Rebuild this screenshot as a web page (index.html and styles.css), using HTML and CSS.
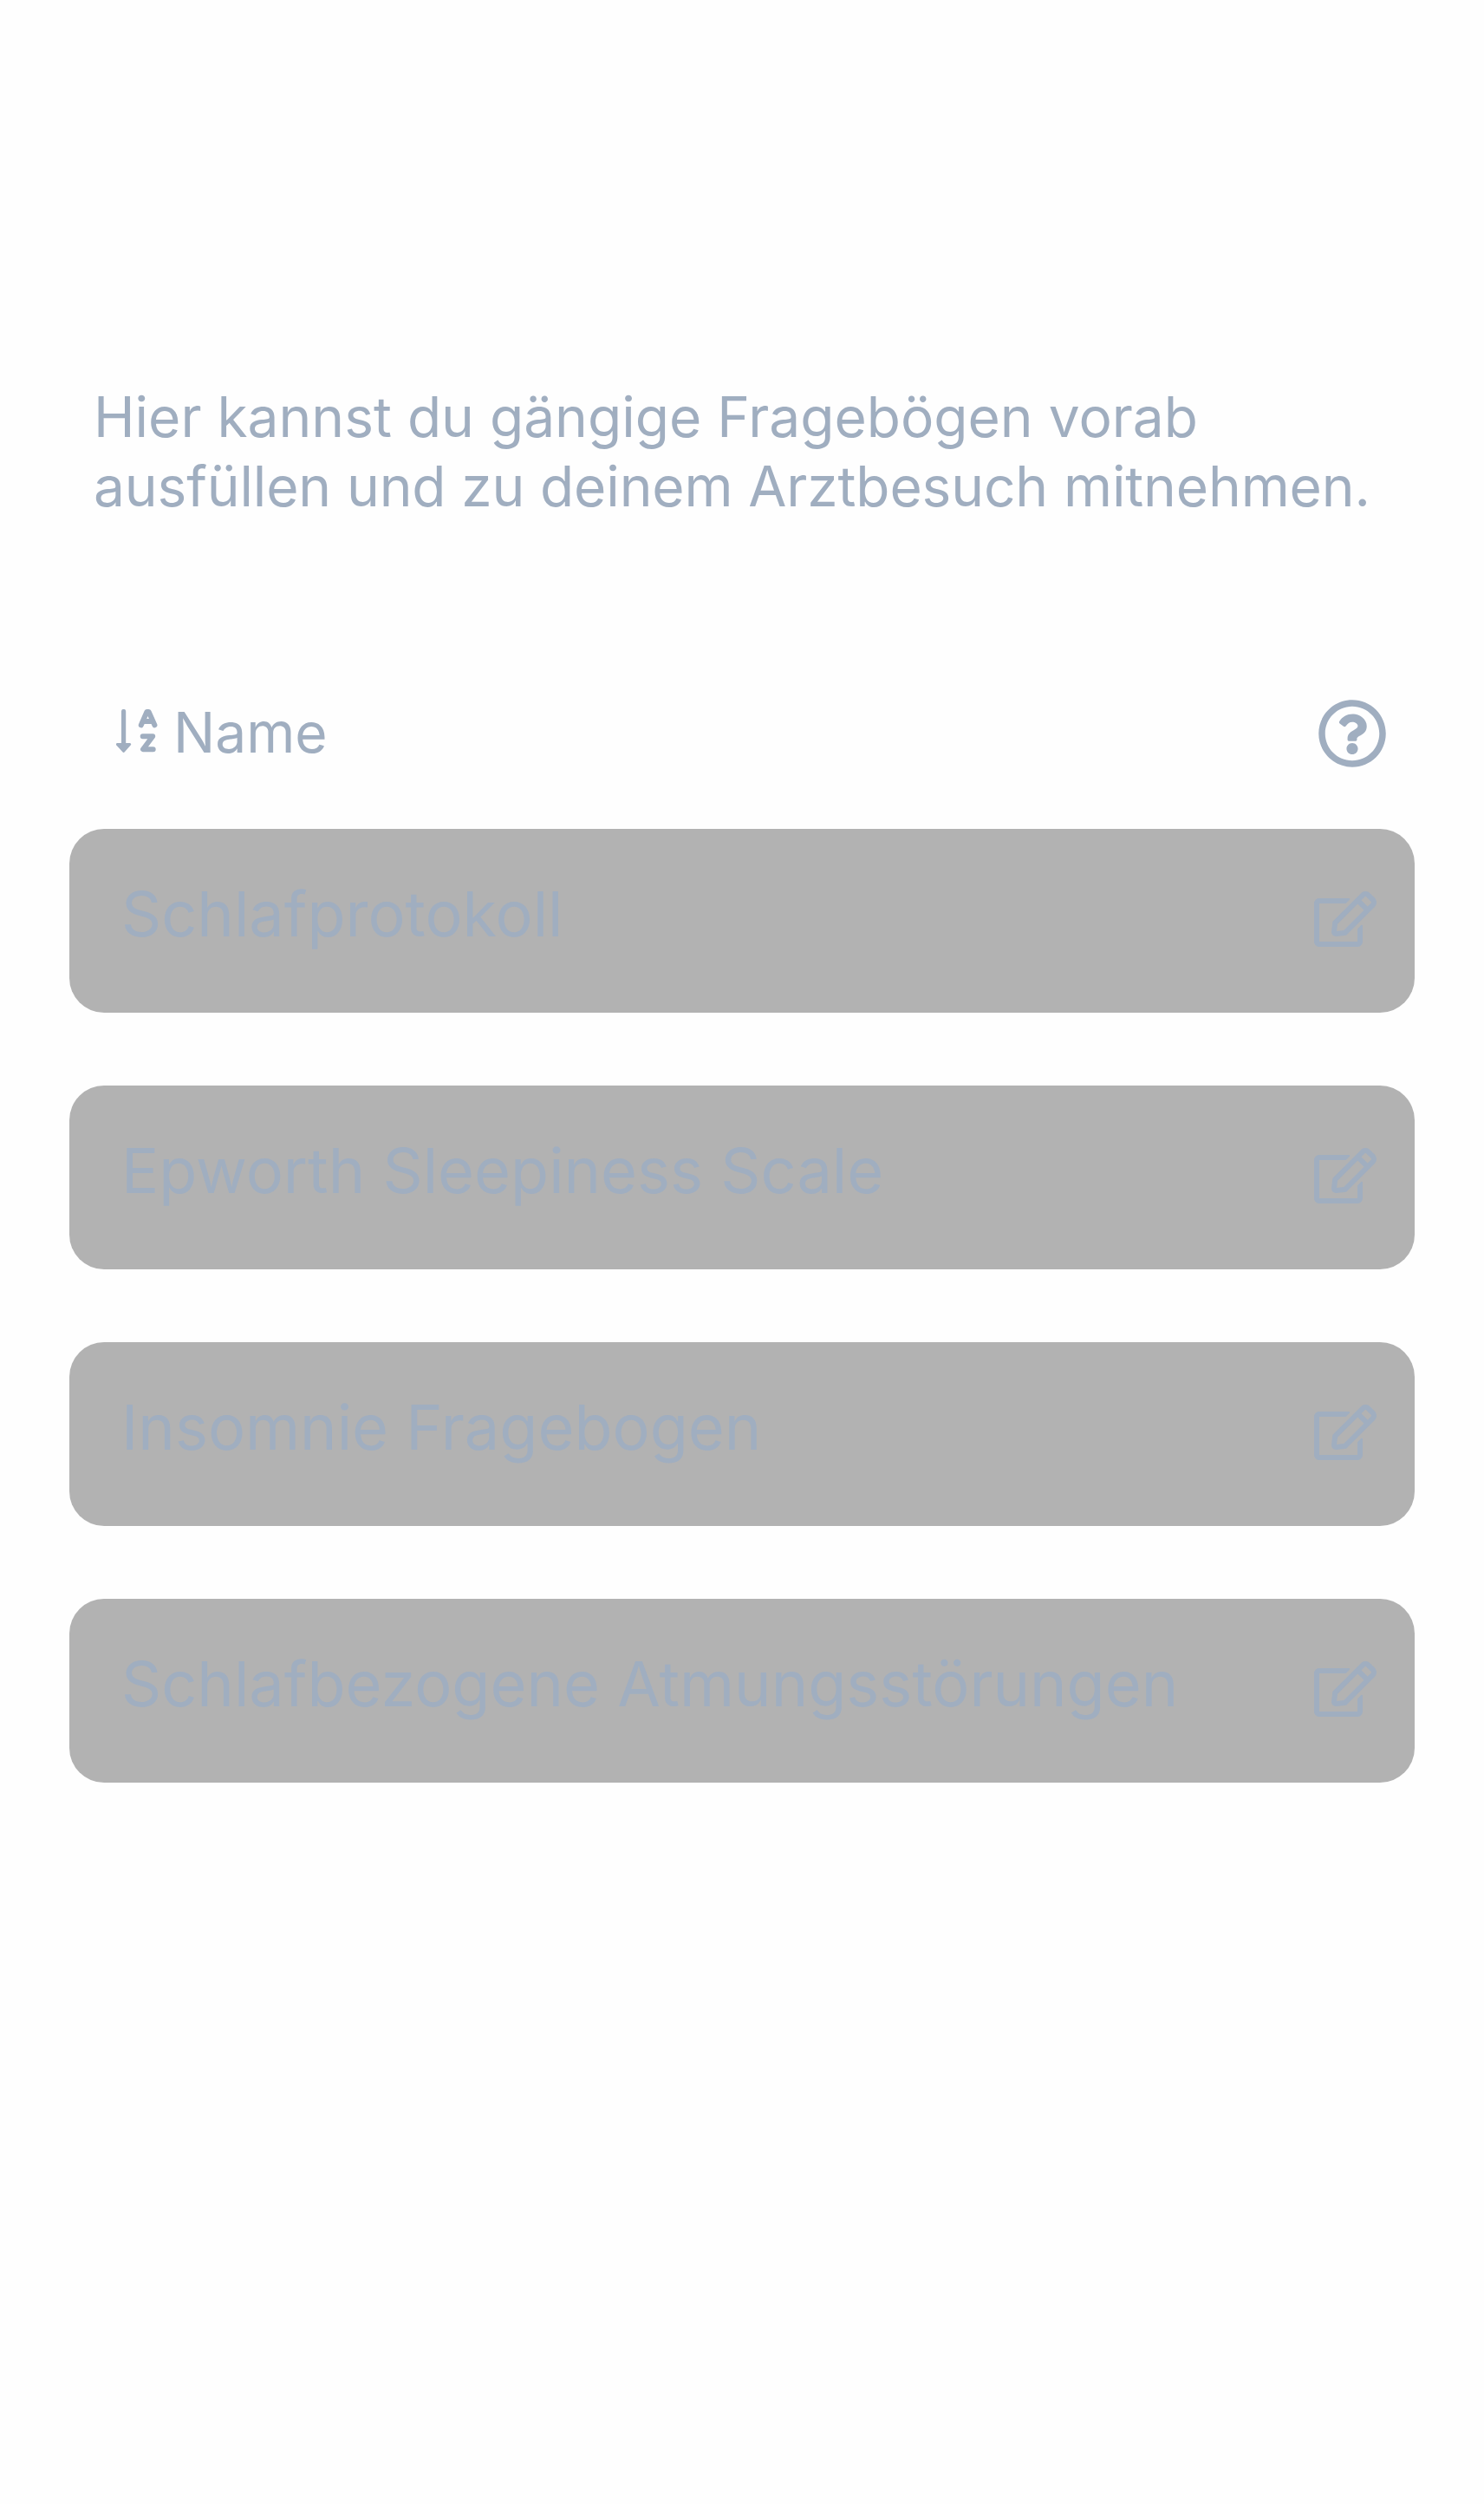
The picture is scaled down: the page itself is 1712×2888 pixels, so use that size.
FILE: index.html
```html
<!DOCTYPE html>
<html lang="de">
<head>
<meta charset="utf-8">
<title>Fragebögen</title>
<link rel="stylesheet" href="styles.css">
</head>
<body>
<svg class="sprite" aria-hidden="true">
  <symbol id="edit" viewBox="0 0 576 512"><path d="M402.3 344.9l32-32c5-5 13.7-1.5 13.7 5.7V464c0 26.5-21.5 48-48 48H48c-26.5 0-48-21.5-48-48V112c0-26.5 21.5-48 48-48h273.5c7.1 0 10.7 8.6 5.7 13.7l-32 32c-1.5 1.5-3.5 2.3-5.7 2.3H48v352h352V350.5c0-2.1.8-4.1 2.3-5.6zm156.6-201.8L296.3 405.7l-90.4 10c-26.2 2.9-48.5-19.2-45.6-45.6l10-90.4L432.9 17.1c22.9-22.9 59.9-22.9 82.7 0l43.2 43.2c22.9 22.9 22.9 60 .1 82.8zM460.1 174L402 115.9 216.2 301.8l-7.3 65.3 65.3-7.3L460.1 174zm64.8-79.7l-43.2-43.2c-4.1-4.1-10.8-4.1-14.8 0L436 82l58.1 58.1 30.9-30.9c4-4.2 4-10.8-.1-14.9z"/></symbol>
</svg>
<main class="page">
  <p class="intro">Hier kannst du gängige Fragebögen vorab <span class="tight">ausfüllen und zu deinem Arztbesuch mitnehmen.</span></p>
  <div class="toolbar">
    <div class="sort">
      <svg class="sort-icon" viewBox="0 0 48 50"><path d="M6 2.500a2.600 2.600 0 0 1 5.200 0V39h4.500a1.500 1.500 0 0 1 1 2.600L9.800 49.300a1.600 1.600 0 0 1-2.400 0L.3 41.600A1.500 1.500 0 0 1 1.300 39H6z"/><path class="glyph" d="M28.800 18.300L35.400 3h2.200L44.400 18.300M32 14h9M30.700 31.200H42.200L31 46.200H42.700"/></svg>
      <span class="sort-label">Name</span>
    </div>
    <svg class="help-icon" viewBox="0 0 512 512"><path d="M256 8C119.043 8 8 119.083 8 256c0 136.997 111.043 248 248 248s248-111.003 248-248C504 119.083 392.957 8 256 8zm0 448c-110.532 0-200-89.431-200-200 0-110.495 89.472-200 200-200 110.491 0 200 89.471 200 200 0 110.53-89.431 200-200 200zm107.244-255.2c0 67.052-72.421 68.084-72.421 92.863V300c0 6.627-5.373 12-12 12h-45.647c-6.627 0-12-5.373-12-12v-8.659c0-35.745 27.1-50.034 47.579-61.516 17.561-9.845 28.324-16.541 28.324-29.579 0-17.246-21.999-28.693-39.784-28.693-23.189 0-33.894 10.977-48.942 29.969-4.057 5.12-11.46 6.071-16.666 2.124l-27.824-21.098c-5.107-3.872-6.251-11.066-2.644-16.363C184.846 131.491 214.94 112 261.794 112c49.071 0 101.45 38.304 101.45 88.8zM298 368c0 23.159-18.841 42-42 42s-42-18.841-42-42 18.841-42 42-42 42 18.841 42 42z"/></svg>
  </div>
  <ul class="list">
    <li class="card"><span>Schlafprotokoll</span><svg class="edit-icon"><use href="#edit"/></svg></li>
    <li class="card"><span>Epworth Sleepiness Scale</span><svg class="edit-icon"><use href="#edit"/></svg></li>
    <li class="card"><span>Insomnie Fragebogen</span><svg class="edit-icon"><use href="#edit"/></svg></li>
    <li class="card"><span>Schlafbezogene Atmungsstörungen</span><svg class="edit-icon"><use href="#edit"/></svg></li>
  </ul>
</main>
</body>
</html>
```
FILE: styles.css
```css
* { box-sizing: border-box; margin: 0; padding: 0; }
body {
  background: #fefefe;
  color: #a0aec0;
  font-family: Inter, "Liberation Sans", sans-serif;
  font-size: 64px;
  line-height: 80px;
}
svg { display: block; fill: currentColor; flex: none; }
.sprite { display: none; }
.page { min-height: 2888px; padding: 441px 80px 0; }
.intro { padding: 0 28px; }
.tight { letter-spacing: -0.13px; }
.toolbar {
  display: flex;
  align-items: center;
  justify-content: space-between;
  margin-top: 205px;
  padding: 0 32px 0 54px;
}
.sort { display: flex; align-items: center; gap: 18px; }
.sort-icon { width: 48px; height: 50px; margin-top: -6px; }
.sort-label { margin-top: -2px; }
.glyph { fill: none; stroke: currentColor; stroke-width: 6; stroke-linecap: round; stroke-linejoin: round; }
.help-icon { width: 80px; height: 80px; }
.list { display: grid; gap: 84px; margin-top: 70px; list-style: none; }
.card {
  display: flex;
  align-items: center;
  justify-content: space-between;
  height: 212px;
  padding: 0 44px 16px 60px;
  border-radius: 40px;
  background: #b2b2b2;
  font-size: 72px;
}
.edit-icon { width: 72px; height: 64px; margin-top: 12px; }
```
